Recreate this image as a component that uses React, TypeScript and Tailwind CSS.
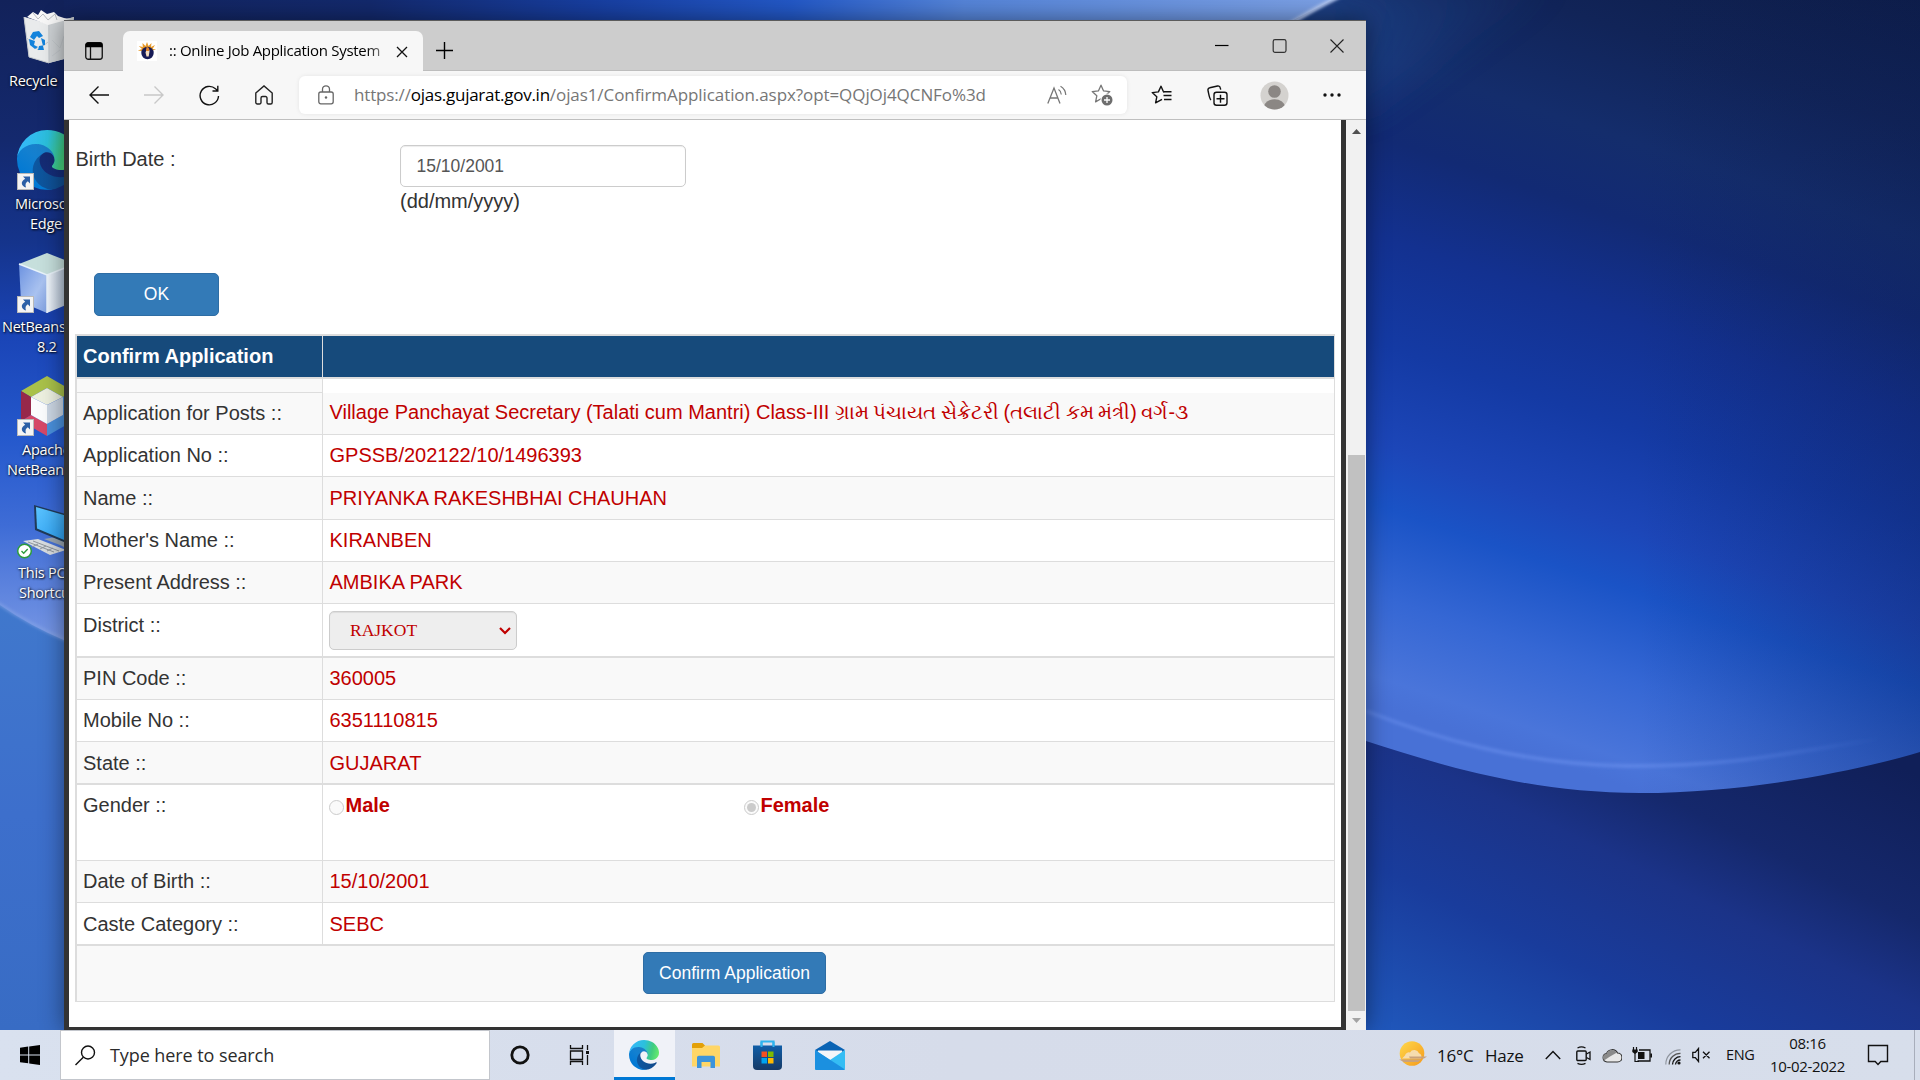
import React from "react";

const SEGOE = "font-['Open_Sans',sans-serif]";
const ARIAL = "font-['Liberation_Sans',sans-serif]";

function Wallpaper() {
  return (
    <svg className="absolute inset-0" width="1920" height="1030" viewBox="0 0 1920 1030" aria-hidden="true">
      <defs>
        <linearGradient id="sky" x1="0" y1="-200" x2="0" y2="700" gradientUnits="userSpaceOnUse" gradientTransform="translate(1366 0) skewY(18.5)">
          <stop offset="0" stopColor="#0d1c46" />
          <stop offset=".16" stopColor="#112458" />
          <stop offset=".28" stopColor="#142d6c" />
          <stop offset=".37" stopColor="#122a74" />
          <stop offset=".48" stopColor="#133190" />
          <stop offset=".6" stopColor="#143aa4" />
          <stop offset=".71" stopColor="#1c46b8" />
          <stop offset=".78" stopColor="#1a53c6" />
          <stop offset=".88" stopColor="#3567d4" />
          <stop offset=".97" stopColor="#4a75da" />
          <stop offset="1" stopColor="#4871d6" />
        </linearGradient>
        <linearGradient id="ground" x1="0" y1="500" x2="0" y2="1030" gradientUnits="userSpaceOnUse" gradientTransform="translate(1366 0) skewY(26.5)">
          <stop offset="0" stopColor="#101f58" />
          <stop offset=".28" stopColor="#15286c" />
          <stop offset=".44" stopColor="#1b3388" />
          <stop offset=".68" stopColor="#193c9c" />
          <stop offset="1" stopColor="#2058bc" />
        </linearGradient>
        <linearGradient id="shade" x1="1640" y1="0" x2="1920" y2="0" gradientUnits="userSpaceOnUse">
          <stop offset="0" stopColor="#0c1c50" stopOpacity="0" />
          <stop offset="1" stopColor="#0c1c50" stopOpacity=".28" />
        </linearGradient>
        <linearGradient id="arc" x1="1366" y1="0" x2="1880" y2="0" gradientUnits="userSpaceOnUse">
          <stop offset="0" stopColor="#6a90ee" stopOpacity=".45" />
          <stop offset=".5" stopColor="#6a90ee" stopOpacity=".6" />
          <stop offset="1" stopColor="#6a90ee" stopOpacity="0" />
        </linearGradient>
        <linearGradient id="lf" x1="0" y1="0" x2="0" y2="640" gradientUnits="userSpaceOnUse">
          <stop offset="0" stopColor="#12225a" />
          <stop offset=".22" stopColor="#14296e" />
          <stop offset=".38" stopColor="#15348c" />
          <stop offset=".52" stopColor="#1a44b6" />
          <stop offset=".68" stopColor="#2458cc" />
          <stop offset=".82" stopColor="#3e6cd6" />
          <stop offset="1" stopColor="#7696e4" />
        </linearGradient>
        <linearGradient id="lb" x1="0" y1="600" x2="0" y2="1030" gradientUnits="userSpaceOnUse">
          <stop offset="0" stopColor="#4078cc" />
          <stop offset=".5" stopColor="#3d6fcc" />
          <stop offset="1" stopColor="#386cc4" />
        </linearGradient>
        <linearGradient id="tp" x1="0" y1="0" x2="1320" y2="0" gradientUnits="userSpaceOnUse">
          <stop offset="0" stopColor="#12225a" />
          <stop offset=".28" stopColor="#13296c" />
          <stop offset=".45" stopColor="#173ea0" />
          <stop offset=".6" stopColor="#2358c6" />
          <stop offset=".73" stopColor="#5584d8" />
          <stop offset="1" stopColor="#7a9fe4" />
        </linearGradient>
        <linearGradient id="glow" x1="1300" y1="0" x2="1560" y2="80" gradientUnits="userSpaceOnUse">
          <stop offset="0" stopColor="#2a60b0" stopOpacity=".75" />
          <stop offset="1" stopColor="#1d4486" stopOpacity="0" />
        </linearGradient>
        <filter id="soft"><feGaussianBlur stdDeviation="1.5" /></filter>
        <filter id="wide" x="-30%" y="-60%" width="160%" height="220%"><feGaussianBlur stdDeviation="18" /></filter>
        <clipPath id="low">
          <path d="M1300 718L1366 741C1440 765 1530 793 1640 793C1750 793 1860 770 1920 752V1030H1300Z" />
        </clipPath>
      </defs>
      <rect width="66" height="1030" fill="url(#lf)" />
      <path d="M0 605Q30 626 66 641V1030H0Z" fill="url(#lb)" />
      <path d="M-4 602Q30 625 68 641" fill="none" stroke="#89a6e8" strokeOpacity=".6" strokeWidth="3" filter="url(#soft)" />
      <rect x="1280" width="640" height="800" fill="url(#sky)" />
      <rect x="1280" width="640" height="800" fill="url(#shade)" />
      <path d="M1290 -20H1560L1366 110H1290Z" fill="url(#glow)" opacity=".6" filter="url(#wide)" />
      <path d="M1366 711C1430 736 1520 765 1628 766S1800 750 1880 739" fill="none" stroke="url(#arc)" strokeWidth="4" filter="url(#soft)" />
      <g clipPath="url(#low)">
        <rect x="1300" y="700" width="620" height="330" fill="url(#ground)" />
      </g>
      <path d="M64 0H1332L1292 21H64Z" fill="url(#tp)" />
      <path d="M1290 24Q1312 10 1340 -4" fill="none" stroke="#b4c8f2" strokeWidth="4" filter="url(#soft)" />
    </svg>
  );
}

function EdgeLogo({ size, id }: { size: number; id: string }) {
  return (
    <svg width={size} height={size} viewBox="0 0 256 256" className="block shrink-0">
      <defs>
        <linearGradient id={id + "a"} x1="60" y1="170" x2="236" y2="170" gradientUnits="userSpaceOnUse">
          <stop stopColor="#0c59a4" />
          <stop offset="1" stopColor="#114a8b" />
        </linearGradient>
        <linearGradient id={id + "b"} x1="150" y1="90" x2="40" y2="220" gradientUnits="userSpaceOnUse">
          <stop stopColor="#1b7fc8" />
          <stop offset=".4" stopColor="#1380d0" />
          <stop offset="1" stopColor="#0078d4" />
        </linearGradient>
        <linearGradient id={id + "c"} x1="10" y1="70" x2="250" y2="130" gradientUnits="userSpaceOnUse">
          <stop stopColor="#35b8f8" />
          <stop offset=".45" stopColor="#2bc0dc" />
          <stop offset=".75" stopColor="#40cc80" />
          <stop offset="1" stopColor="#66eb6e" />
        </linearGradient>
      </defs>
      <path transform="translate(-4.63 -4.92)" fill={`url(#${id}a)`} d="M235.68 195.46a93.73 93.73 0 0 1-10.54 4.71 101.87 101.87 0 0 1-35.9 6.46c-47.32 0-88.54-32.55-88.54-74.32A31.48 31.48 0 0 1 117.13 105c-42.8 1.8-53.8 46.4-53.8 72.53 0 73.88 68.09 81.37 82.76 81.37 7.91 0 19.84-2.3 27-4.56l1.31-.44a128.34 128.34 0 0 0 66.6-52.8 4 4 0 0 0-5.32-5.64Z" />
      <path fill={`url(#${id}b)`} d="M105.73 241.42A79.2 79.2 0 0 1 83 220.08a80.72 80.72 0 0 1 29.49-120.75c3.12-1.47 8.45-4.13 15.54-4a32.35 32.35 0 0 1 25.69 13 31.88 31.88 0 0 1 6.36 18.66c0-.21 24.46-79.6-80-79.6-43.9 0-80 41.66-80 78.21a130.15 130.15 0 0 0 12.11 56 128 128 0 0 0 156.38 67.11 75.55 75.55 0 0 1-62.78-8Z" />
      <path fill={`url(#${id}c)`} d="M152.33 148.86c-.81 1.05-3.3 2.5-3.3 5.66 0 2.61 1.7 5.12 4.72 7.23 14.38 10 41.49 8.68 41.56 8.68a59.56 59.56 0 0 0 30.27-8.35A61.38 61.38 0 0 0 256 109.2c.26-22.41-8-37.31-11.34-43.91C223.46 23.84 177.72 0 128 0A128 128 0 0 0 0 126.2c.48-36.54 36.8-66.05 80-66.05 3.5 0 23.46.34 42 10.07 16.34 8.58 24.9 18.94 30.85 29.21 6.18 10.67 7.28 24.15 7.28 29.52s-2.74 13.33-7.8 19.91Z" />
    </svg>
  );
}

function Shortcut() {
  return (
    <svg className="absolute left-[17px] bottom-0" width="17" height="17" viewBox="0 0 17 17">
      <rect x=".5" y=".5" width="16" height="16" fill="#f4f4f4" stroke="#b9b9b9" />
      <path d="M6 3.500h7v7l-2.200-2.200C8.500 9.800 8 11.500 9 14.500 4.500 13 2.800 9 8.200 5.700Z" fill="#2b5fa6" />
    </svg>
  );
}

function RecycleIcon() {
  return (
    <svg className="absolute left-[22px] top-[8px]" width="52" height="56" viewBox="22 8 52 56">
      <path d="M24 17L48 24 74 17 68 58 49 63 29 57Z" fill="#dfe2e4" />
      <path d="M24 17L48 24 49 63 29 57Z" fill="#e9ebec" />
      <path d="M48 24L74 17 68 58 49 63Z" fill="#cdd1d4" />
      <path d="M27 17L33 12 38 15 41 10 47 14 54 12 58 16 64 18 70 19 48 25Z" fill="#f7f7f7" />
      <path d="M33 13L38 19 43 14 48 20 55 14 57 20" fill="none" stroke="#b8bcc0" />
      <path d="M24 17L29 57 49 63V25M27 38L38 50 48 42M52 40L60 48 64 36M52 56L60 50" fill="none" stroke="#c3c8cc" />
      <g fill="#1383dc">
        <path d="M33 32L39 31 43 36 39 38 37 36 34 40 30 37Z" />
        <path d="M29 39L35 41 34 45 38 47 35 49 30 45Z" />
        <path d="M39 46L45 45 45 40 41 38 44 50 38 50Z" />
      </g>
    </svg>
  );
}

function CubeIcon() {
  return (
    <svg className="absolute left-[18px] top-0" width="58" height="60" viewBox="0 0 58 60">
      <defs>
        <linearGradient id="cb1" x1="0" y1="0" x2="1" y2="1">
          <stop stopColor="#6c92e0" />
          <stop offset=".6" stopColor="#a9c2f0" />
          <stop offset="1" stopColor="#7f9fe0" />
        </linearGradient>
        <linearGradient id="cb2" x1="0" y1="0" x2="1" y2="0">
          <stop stopColor="#f2f7fc" />
          <stop offset="1" stopColor="#8aa0bc" />
        </linearGradient>
      </defs>
      <path d="M29 0L57 11 29 22 1 11Z" fill="#c6dfdc" />
      <path d="M1 11L29 22V60L3 49Z" fill="url(#cb1)" />
      <path d="M57 11L29 22V60L55 49Z" fill="url(#cb2)" />
      <path d="M1 11L29 22 57 11M29 22V60" fill="none" stroke="#eaf4fb" strokeWidth="1.500" />
    </svg>
  );
}

function ApacheCubeIcon() {
  return (
    <svg className="absolute left-[20px] top-0" width="54" height="60" viewBox="0 0 54 60">
      <path d="M27 0L53 15 43 21 27 12 11 21 1 15Z" fill="#a9c14a" />
      <path d="M1 15L11 21V39L1 45Z" fill="#97284a" />
      <path d="M1 45L11 39 27 48V60Z" fill="#d64868" />
      <path d="M53 15V45L27 60V48L43 39V21Z" fill="#4a90dc" />
      <path d="M27 12L43 21 27 29 11 21Z" fill="#edf0e0" />
      <path d="M11 21L27 29V48L11 39Z" fill="#fbfcfd" />
      <path d="M43 21L27 29V48L43 39Z" fill="#ccd7e4" />
    </svg>
  );
}

function PcIcon() {
  return (
    <svg className="absolute left-[16px] top-0" width="60" height="56" viewBox="0 0 60 56">
      <defs>
        <linearGradient id="scr" x1="0" y1="0" x2="1" y2="1">
          <stop stopColor="#5cc4ff" />
          <stop offset="1" stopColor="#1f97f0" />
        </linearGradient>
      </defs>
      <path d="M28 34L40 32 52 36V44L44 40Z" fill="#9aa6b2" />
      <path d="M18 0L60 12V42L19 25Z" fill="#203a58" />
      <path d="M20 2L60 13.500V40L21 23.500Z" fill="url(#scr)" />
      <path d="M7 36L22 34 50 45 34 50Z" fill="#d9dde0" />
      <path d="M12 37L38 47M17 36L43 46M22 39L16 42M30 41L24 44M37 43L31 46" stroke="#8f969c" fill="none" />
      <circle cx="8.500" cy="46" r="6.800" fill="#fff" stroke="#2d9c3c" strokeWidth="1.500" />
      <path d="M5.500 46l2.200 2.200 4-4.200" fill="none" stroke="#2d9c3c" strokeWidth="1.400" />
    </svg>
  );
}

function DeskLabel({ children, className }: { children: React.ReactNode; className: string }) {
  return (
    <span className={"absolute whitespace-nowrap text-[14.5px] leading-5 tracking-[-0.25px] text-white [text-shadow:1px_1px_2px_rgba(0,0,0,0.9),0_0_3px_rgba(0,0,0,0.6)] " + className}>
      {children}
    </span>
  );
}

function DesktopIcons() {
  return (
    <div className={"absolute left-0 top-0 h-[1030px] w-[120px] " + SEGOE}>
      <RecycleIcon />
      <DeskLabel className="left-[9px] top-[71px]">Recycle</DeskLabel>
      <div className="absolute left-0 top-[130px] h-[60px] w-[80px]">
        <div className="pl-[17px]"><EdgeLogo size={60} id="desk" /></div>
        <Shortcut />
      </div>
      <DeskLabel className="left-[15px] top-[194px]">Microsoft</DeskLabel>
      <DeskLabel className="left-[30px] top-[214px]">Edge</DeskLabel>
      <div className="absolute left-0 top-[253px] h-[60px] w-[80px]"><CubeIcon /><Shortcut /></div>
      <DeskLabel className="left-[2px] top-[317px]">NetBeans</DeskLabel>
      <DeskLabel className="left-[37px] top-[337px]">8.2</DeskLabel>
      <div className="absolute left-0 top-[376px] h-[60px] w-[80px]"><ApacheCubeIcon /><Shortcut /></div>
      <DeskLabel className="left-[22px] top-[440px]">Apache</DeskLabel>
      <DeskLabel className="left-[7px] top-[460px]">NetBeans</DeskLabel>
      <div className="absolute left-0 top-[505px] h-[60px] w-[80px]"><PcIcon /></div>
      <DeskLabel className="left-[18px] top-[563px]">This PC -</DeskLabel>
      <DeskLabel className="left-[19px] top-[583px]">Shortcut</DeskLabel>
    </div>
  );
}

function TitleBar() {
  return (
    <div className="flex h-[50px] bg-[#cdcdcd] shadow-[inset_0_-1px_0_#bdbdbd]">
      <div className="flex w-[59px] pl-[21px] pt-[21px]">
        <svg width="18" height="18" viewBox="0 0 18 18">
          <rect x=".75" y=".75" width="16.500" height="16.500" rx="2.500" fill="none" stroke="#111" strokeWidth="1.300" />
          <path d="M.5 5.200V3A2.500 2.500 0 0 1 3 .5h12A2.500 2.500 0 0 1 17.500 3v2.200Z" fill="#000" />
          <path d="M5.500 5v12" stroke="#111" strokeWidth="1.300" />
        </svg>
      </div>
      <div className="relative z-10 mt-[10px] flex h-[40px] w-[300px] rounded-t-[7px] bg-[#f7f7f7] pl-[14px]">
        <svg className="mt-[10px]" width="20" height="20" viewBox="0 0 20 20">
          <rect width="20" height="20" fill="#fff" />
          <path d="M10 1l1.500 4L14.500 2l-.5 4 4-2-2.500 4 3.500 0-4 2H4L.8 9.500 5 8 1.800 5l4 1L5.500 2l3 3Z" fill="#e79a2c" />
          <circle cx="10.500" cy="12" r="6.200" fill="#171b56" />
          <path d="M10 7.500c2 0 2.800 1.500 2.500 3l-.8 5H9.500l-1-4Z" fill="#f3dcc0" />
          <path d="M9.500 6c2.500 0 3 2 2.500 4H9Z" fill="#e2832a" />
        </svg>
        <div className="ml-[12px] w-[223px] whitespace-nowrap">
          <div className="w-[215px] bg-gradient-to-r from-black from-90% to-[#999] bg-clip-text pt-[9px] text-[15px] leading-5 tracking-[-0.3px] text-transparent">
            :: Online Job Application System
          </div>
        </div>
        <svg className="mt-[15px] ml-[4px]" width="12" height="12" viewBox="0 0 12 12">
          <path d="M1 1l10 10M11 1L1 11" stroke="#111" strokeWidth="1.300" />
        </svg>
      </div>
      <svg className="ml-[12px] mt-[20px]" width="19" height="19" viewBox="0 0 19 19">
        <path d="M9.500 1v17M1 9.500h17" stroke="#000" strokeWidth="1.400" />
      </svg>
      <div className="ml-auto flex pr-[22px] pt-[18px]">
        <svg className="mr-[43px]" width="14" height="14" viewBox="0 0 14 14"><path d="M0 6.500h13.500" stroke="#000" strokeWidth="1.200" /></svg>
        <svg className="mr-[43px]" width="15" height="14" viewBox="0 0 15 14"><rect x="1.200" y=".7" width="12.800" height="12.600" rx="1.800" fill="none" stroke="#333" strokeWidth="1.200" /></svg>
        <svg width="14" height="14" viewBox="0 0 14 14"><path d="M.5 .5l13 13M13.500 .5l-13 13" stroke="#222" strokeWidth="1.100" /></svg>
      </div>
    </div>
  );
}

const STAR = "M10 1.200l2.600 5.700 6.200.7-4.600 4.200 1.300 6.100L10 14.800l-5.400 3.100 1.200-6.100L1.200 7.600l6.200-.7Z";

function Toolbar() {
  return (
    <div className="flex h-[49px] items-center border-b border-[#bfbfbf] bg-[#f7f7f7]">
      <div className="flex items-center pl-[25px] text-black">
        <svg className="mr-[35px]" width="20" height="20" viewBox="0 0 20 20"><path d="M9.500 1.500L1 10l8.500 8.500M1 10h19" fill="none" stroke="#111" strokeWidth="1.400" /></svg>
        <svg className="mr-[35px]" width="20" height="20" viewBox="0 0 20 20"><path d="M10.500 1.500L19 10l-8.500 8.500M19 10H0" fill="none" stroke="#c8c8c8" strokeWidth="1.400" /></svg>
        <svg className="mr-[34px]" width="21" height="21" viewBox="0 0 21 21">
          <path d="M19.500 11A9.200 9.200 0 1 1 16.500 3.800L18.500 5.500M18.800 .8V6h-5.300" fill="none" stroke="#111" strokeWidth="1.400" />
        </svg>
        <svg className="mr-[25px]" width="20" height="20" viewBox="0 0 20 20">
          <path d="M1.800 8L10 .9 18.200 8v9.500a1.500 1.500 0 0 1-1.500 1.500h-2.200a1.500 1.500 0 0 1-1.500-1.500V13a1.500 1.500 0 0 0-1.500-1.500h-3A1.500 1.500 0 0 0 7 13v4.500A1.500 1.500 0 0 1 5.500 19H3.300a1.500 1.500 0 0 1-1.500-1.500Z" fill="none" stroke="#222" strokeWidth="1.400" />
        </svg>
      </div>
      <div className="flex h-[38px] w-[828px] items-center rounded-[6px] bg-white pl-[19px] text-[17px] leading-[38px] text-[#767676] shadow-[0_0_4px_rgba(0,0,0,0.08)]">
        <svg className="mr-[20px]" width="16" height="20" viewBox="0 0 16 20">
          <rect x=".8" y="7" width="14.400" height="11.800" rx="2" fill="none" stroke="#666" strokeWidth="1.300" />
          <path d="M4.500 7V4.300a3.500 3.500 0 0 1 7 0V7" fill="none" stroke="#666" strokeWidth="1.300" />
          <circle cx="8" cy="12.500" r="1.200" fill="#666" />
        </svg>
        <span className="tracking-[-0.15px]">https://</span>
        <span className="tracking-[-0.26px] text-black">ojas.gujarat.gov.in</span>
        <span className="tracking-[-0.08px]">/ojas1/ConfirmApplication.aspx?opt=QQjOj4QCNFo%3d</span>
        <svg className="ml-auto" width="20" height="20" viewBox="0 0 20 20">
          <path d="M.8 18.500L7 3l6 15.500M3 13h8" fill="none" stroke="#777" strokeWidth="1.300" />
          <path d="M11.500 4.500q2.500 1.500 2.800 5M13.500 1.200q5 2.800 5.300 8.800" fill="none" stroke="#777" strokeWidth="1.200" />
        </svg>
        <svg className="ml-[24px] mr-[14px]" width="22" height="22" viewBox="0 0 22 22">
          <path d={STAR} fill="none" stroke="#767676" strokeWidth="1.300" strokeLinejoin="round" />
          <circle cx="16" cy="16" r="6.500" fill="#fff" />
          <circle cx="16" cy="16" r="5.500" fill="#6e6e6e" />
          <path d="M16 13v6M13 16h6" stroke="#fff" strokeWidth="1.300" />
        </svg>
      </div>
      <svg className="ml-[24px]" width="21" height="20" viewBox="0 0 21 20">
        <path d="M13 6.800L12.600 7 10 1.200 7.400 6.900l-6.200.7 4.600 4.200-1.200 6.100 6.400-3.600" fill="none" stroke="#111" strokeWidth="1.400" strokeLinejoin="round" />
        <path d="M13 6.800h7.500M12.500 10.500h8M13 14.500h7.500" stroke="#111" strokeWidth="1.400" />
      </svg>
      <svg className="ml-[35px]" width="21" height="21" viewBox="0 0 21 21">
        <path d="M4 15C2.500 14 2 10 1 5.500A2.200 2.200 0 0 1 2.800 2.800L10.500 1a2.200 2.200 0 0 1 2.700 1.700l.5 2" fill="none" stroke="#111" strokeWidth="1.400" />
        <rect x="7" y="7.200" width="13" height="13" rx="2.500" fill="none" stroke="#111" strokeWidth="1.400" />
        <path d="M13.500 9.800v8M9.500 13.800h8" stroke="#111" strokeWidth="1.400" />
      </svg>
      <svg className="ml-[32px]" width="29" height="29" viewBox="0 0 29 29">
        <clipPath id="avc"><circle cx="14.500" cy="14.500" r="14" /></clipPath>
        <g clipPath="url(#avc)">
          <rect width="29" height="29" fill="#d4d2cf" />
          <circle cx="14.500" cy="10.500" r="6.300" fill="#8b8784" />
          <ellipse cx="14.500" cy="26" rx="10.500" ry="7.800" fill="#8b8784" />
        </g>
      </svg>
      <svg className="ml-[34px]" width="18" height="6" viewBox="0 0 18 6">
        <g fill="#111"><circle cx="2" cy="3" r="1.700" /><circle cx="9" cy="3" r="1.700" /><circle cx="16" cy="3" r="1.700" /></g>
      </svg>
    </div>
  );
}

function Row({ label, height, striped, thick, low, children }: { label: string; height: string; striped?: boolean; thick?: boolean; low?: boolean; children?: React.ReactNode }) {
  return (
    <div className={"flex border-[#ddd] " + height + (striped ? " bg-[#f9f9f9]" : " bg-white") + (thick ? " border-b-2" : " border-b")}>
      <div className={"w-[246px] shrink-0 border-r border-[#ddd] pl-[6px] " + (low ? "pt-[7px]" : "pt-[6px]")}>{label}</div>
      <div className={"grow pl-[6.5px] text-[#c00000] " + (low ? "pt-[7px]" : "pt-[6px]")}>{children}</div>
    </div>
  );
}

function Radio({ checked }: { checked?: boolean }) {
  return (
    <span className="mt-[9px] flex h-[15px] w-[15px] shrink-0 items-center justify-center rounded-full border border-[#cbcbcb] bg-[#fafafa]">
      {checked && <span className="h-[9px] w-[9px] rounded-full bg-[#cbcbcb]" />}
    </span>
  );
}

function PageContent() {
  return (
    <div className={"flex h-[910px] w-[1282px] flex-col border-x-[5px] border-b-[3px] border-[#333] bg-white text-[20px] leading-[28.6px] text-[#333] " + ARIAL}>
      <div className="flex h-[153px] pl-[6.5px] pt-[25px]">
        <div className="w-[324.500px]">Birth Date :</div>
        <div>
          <div className="h-[42px] w-[286px] rounded-[5px] border border-[#ccc] pl-[15.5px] text-[17.5px] leading-[40px] text-[#555] shadow-[inset_0_1px_1px_rgba(0,0,0,0.075)]">15/10/2001</div>
          <div>(dd/mm/yyyy)</div>
        </div>
      </div>
      <div className="ml-[25px] flex h-[43px] w-[125px] items-center justify-center rounded-[5px] border border-[#2e6da4] bg-[#337ab7] text-[17.5px] text-white">OK</div>
      <div className="ml-[6px] mt-[18px] flex w-[1260px] flex-col border-l-2 border-r border-t-2 border-[#ddd]">
        <div className="flex h-[43px] border-b-2 border-[#ddd] bg-[#164a7b] font-bold text-white">
          <div className="w-[246px] border-r border-[#ddd] pl-[6px] pt-[6px]">Confirm Application</div>
        </div>
        <div className="flex h-[14px]">
          <div className="w-[246px] border-b border-r border-[#ddd] bg-[#f9f9f9]" />
        </div>
        <Row label="Application for Posts ::" height="h-[42px]" striped>
          <div className="-mt-px whitespace-pre">Village Panchayat Secretary (Talati cum Mantri) Class-III <span className="text-[19.7px] [word-spacing:-0.9px]">ગ્રામ પંચાયત સેક્રેટરી (તલાટી કમ મંત્રી) વર્ગ-૩</span></div>
        </Row>
        <Row label="Application No ::" height="h-[42px]">GPSSB/202122/10/1496393</Row>
        <Row label="Name ::" height="h-[43px]" striped low>PRIYANKA RAKESHBHAI CHAUHAN</Row>
        <Row label="Mother's Name ::" height="h-[42px]">KIRANBEN</Row>
        <Row label="Present Address ::" height="h-[42px]" striped>AMBIKA PARK</Row>
        <Row label="District ::" height="h-[54px]" thick low>
          <div className="-ml-[0.5px] flex h-[39px] w-[188px] items-center justify-between rounded-[5px] border border-[#ccc] bg-[#eee] pl-[20px] pr-[5px] font-['Liberation_Serif',serif] text-[17.5px] shadow-[inset_0_1px_1px_rgba(0,0,0,0.075)]">
            RAJKOT
            <svg width="12" height="8" viewBox="0 0 12 8"><path d="M1 1l5 5 5-5" fill="none" stroke="#c00000" strokeWidth="2.200" /></svg>
          </div>
        </Row>
        <Row label="PIN Code ::" height="h-[42px]" striped>360005</Row>
        <Row label="Mobile No ::" height="h-[42px]">6351110815</Row>
        <Row label="State ::" height="h-[43px]" striped thick low>GUJARAT</Row>
        <Row label="Gender ::" height="h-[76px]">
          <div className="-ml-[0.5px] flex font-bold">
            <div className="flex w-[415px]"><Radio /><span className="ml-[1.5px]">Male</span></div>
            <Radio checked /><span className="ml-[1.5px]">Female</span>
          </div>
        </Row>
        <Row label="Date of Birth ::" height="h-[42px]" striped>15/10/2001</Row>
        <Row label="Caste Category ::" height="h-[43px]" thick low>SEBC</Row>
        <div className="flex h-[56px] border-b border-[#ddd] bg-[#f9f9f9] pl-[566px] pt-[6px]">
          <div className="flex h-[42px] w-[183px] items-center justify-center rounded-[5px] border border-[#2e6da4] bg-[#337ab7] text-[17.5px] text-white">Confirm Application</div>
        </div>
      </div>
    </div>
  );
}

function Scrollbar() {
  return (
    <div className="flex h-[910px] w-[20px] flex-col items-center bg-[#f1f1f1]">
      <svg className="mt-[9px]" width="9" height="5" viewBox="0 0 9 5"><path d="M0 5L4.500 0 9 5Z" fill="#505050" /></svg>
      <div className="ml-px mt-[321px] h-[556px] w-[17px] bg-[#c1c1c1]" />
      <svg className="mt-[7px]" width="9" height="5" viewBox="0 0 9 5"><path d="M0 0L4.500 5 9 0Z" fill="#a3a3a3" /></svg>
    </div>
  );
}

function BrowserWindow() {
  return (
    <div className={"absolute left-[64px] top-[20px] flex w-[1302px] flex-col border-t border-[#5c5c5c] shadow-[0_0_22px_rgba(0,0,0,0.45)] " + SEGOE}>
      <TitleBar />
      <Toolbar />
      <div className="flex">
        <PageContent />
        <Scrollbar />
      </div>
    </div>
  );
}

function Tray() {
  return (
    <div className="ml-auto flex h-full items-center text-[#111]">
      <svg className="mt-[-2px]" width="30" height="28" viewBox="0 0 30 28">
        <defs>
          <linearGradient id="sun" x1="0" y1="0" x2="1" y2="1"><stop stopColor="#ffd84a" /><stop offset="1" stopColor="#f59a1c" /></linearGradient>
        </defs>
        <circle cx="14" cy="13.500" r="12.300" fill="url(#sun)" />
        <path d="M4 18.500h19a3.500 3.500 0 0 0-2-5.200 5 5 0 0 0-9-.8 4 4 0 0 0-5 3Z" fill="#f6dcae" />
        <path d="M1 19.500h22l-3 2.500H6ZM11 16.500h18l-3 2H12Z" fill="#c9a27c" />
      </svg>
      <span className="ml-[9px] mt-[2px] w-[48px] whitespace-nowrap text-[17px] leading-5 tracking-[-0.2px]">16°C</span>
      <span className="mt-[2px] w-[60px] text-[17px] leading-5 tracking-[-0.2px]">Haze</span>
      <svg className="mr-[15px]" width="16" height="10" viewBox="0 0 16 10"><path d="M.8 9L8 1.500 15.200 9" fill="none" stroke="#111" strokeWidth="1.400" /></svg>
      <svg className="mr-[11px]" width="15" height="19" viewBox="0 0 15 19">
        <rect x=".8" y="5" width="9.400" height="9.500" rx="1" fill="none" stroke="#111" strokeWidth="1.400" />
        <path d="M10.500 8l3.500-2v7.500l-3.500-2M1.500 2Q5.500-.2 9.500 2M1.500 17.300Q5.500 19.300 9.500 17.300" fill="none" stroke="#111" strokeWidth="1.300" />
      </svg>
      <svg className="mr-[10px]" width="20" height="16" viewBox="0 0 20 16">
        <path d="M5 15a4.200 4.200 0 0 1-.5-8.300A6 6 0 0 1 15.500 6a4.500 4.500 0 0 1 0 9Z" fill="#e8e8e8" stroke="#333" strokeWidth="1.200" />
        <path d="M1 11a4 4 0 0 1 3.500-4.300A6 6 0 0 1 15 5.500L8 9.500 2 13.500Z" fill="#8a8a8a" />
      </svg>
      <svg className="mr-[13px]" width="20" height="16" viewBox="0 0 20 16">
        <path d="M1.500 0v3M4.500 0v3M3 6v8.500h4" stroke="#111" strokeWidth="1.200" fill="none" />
        <path d="M.3 2.500h5.400v2.500L3 7 .3 5Z" fill="#111" />
        <path d="M7 3h11v11H5.500" fill="none" stroke="#111" strokeWidth="1.300" />
        <rect x="6" y="5" width="6.500" height="7" fill="#111" />
        <rect x="18.300" y="6.500" width="1.700" height="4" fill="#111" />
      </svg>
      <svg className="mr-[11px] mt-[3px]" width="16" height="16" viewBox="0 0 16 16" fill="none">
        <path d="M.8 15.500A14.500 14.500 0 0 1 15.500.8" stroke="#8f959e" strokeWidth="1.200" />
        <path d="M4.200 15.500A11.200 11.200 0 0 1 15.500 4.300" stroke="#555" strokeWidth="1.300" />
        <path d="M7.500 15.500a8 8 0 0 1 8-7.800M10.500 15.500a5 5 0 0 1 5-4.500" stroke="#111" strokeWidth="1.300" />
        <circle cx="14" cy="14" r="1.600" fill="#111" />
      </svg>
      <svg className="mr-[15px]" width="19" height="16" viewBox="0 0 19 16" fill="none" stroke="#111" strokeWidth="1.300">
        <path d="M.8 5.300h2.500L6.500 1.500v13L3.300 10.700H.8ZM11 4.800l6.500 6.500M17.500 4.800L11 11.300" />
      </svg>
      <span className="w-[36px] text-[14.5px] leading-5 tracking-[-0.3px]">ENG</span>
      <div className="flex w-[91px] flex-col items-center text-[15px] leading-[23px] tracking-[-0.33px]">
        <span>08:16</span>
        <span>10-02-2022</span>
      </div>
      <svg className="ml-[14px]" width="22" height="22" viewBox="0 0 22 22">
        <path d="M1.500 1.500h19v16h-6.700L11 20.500 8.200 17.500H1.500Z" fill="none" stroke="#111" strokeWidth="1.400" />
      </svg>
      <div className="ml-[25px] h-full w-[6px] border-l border-[#a8aebb]" />
    </div>
  );
}

function Taskbar() {
  return (
    <div className={"absolute left-0 top-[1030px] flex h-[50px] w-[1920px] items-center bg-gradient-to-r from-[#d9e1ef] via-[#d6dcea] to-[#d7deeb] " + SEGOE}>
      <svg className="ml-[20px] mr-[20px]" width="20" height="20" viewBox="0 0 20 20">
        <path d="M0 2.800L8.200 1.600V9.400H0ZM9.200 1.500L20 0V9.400H9.200ZM0 10.400H8.200V18.300L0 17.200ZM9.200 10.400H20V20L9.200 18.400Z" fill="#000" />
      </svg>
      <div className="flex h-[50px] w-[430px] items-center border border-[#c3c6cc] bg-white pl-[14px] text-[18px] leading-5 tracking-[-0.08px] text-[#2b2b2b]">
        <svg className="mr-[14px]" width="21" height="21" viewBox="0 0 21 21">
          <circle cx="13" cy="7.500" r="6.500" fill="none" stroke="#111" strokeWidth="1.400" />
          <path d="M8.300 12.200L.5 20" stroke="#111" strokeWidth="1.400" />
        </svg>
        Type here to search
      </div>
      <svg className="ml-[20px]" width="20" height="20" viewBox="0 0 20 20"><circle cx="10" cy="10" r="8.200" fill="none" stroke="#111" strokeWidth="2.800" /></svg>
      <svg className="ml-[39px]" width="22" height="20" viewBox="0 0 22 20">
        <path d="M1.500 0v3.500h12V0M1.500 20v-3.500h12V20M1.500 6h12v8.500h-12ZM18.500 0v5M18.500 10v10" fill="none" stroke="#111" strokeWidth="1.300" />
        <rect x="17" y="6" width="3" height="3" fill="#111" />
      </svg>
      <div className="ml-[23px] flex h-[50px] w-[61px] items-center justify-center border-b-[3px] border-[#0078d4] bg-[#f0f2f8] pr-[2px] pt-[3px]">
        <EdgeLogo size={30} id="bar" />
      </div>
      <svg className="ml-[17px]" width="28" height="25" viewBox="0 0 28 25">
        <path d="M0 1.500A1.500 1.500 0 0 1 1.500 0h9l2.500 2.500V6H0Z" fill="#e3a008" />
        <path d="M0 5h10l3-2.500h13.500A1.500 1.500 0 0 1 28 4v19.500H0Z" fill="#ffd667" />
        <path d="M5 25V14.500A1.800 1.800 0 0 1 6.800 12.700h14.400a1.800 1.800 0 0 1 1.800 1.800V25h-4.500v-6h-9v6Z" fill="#3d94db" />
      </svg>
      <svg className="ml-[33px]" width="29" height="30" viewBox="0 0 29 30">
        <defs><linearGradient id="bag" x1="0" y1="0" x2="0" y2="1"><stop stopColor="#0f5ea8" /><stop offset="1" stopColor="#173a66" /></linearGradient></defs>
        <path d="M8.500 8V1.500h12V8" fill="none" stroke="#2fb4ee" strokeWidth="2.200" />
        <path d="M0 5.500h29V26a4 4 0 0 1-4 4H4a4 4 0 0 1-4-4Z" fill="url(#bag)" />
        <path d="M8.500 2v5M20.500 2v5" stroke="#2fb4ee" strokeWidth="2" />
        <rect x="8.500" y="11.500" width="5.500" height="5.500" fill="#f25022" />
        <rect x="15" y="11.500" width="5.500" height="5.500" fill="#7fba00" />
        <rect x="8.500" y="18" width="5.500" height="5.500" fill="#00a4ef" />
        <rect x="15" y="18" width="5.500" height="5.500" fill="#ffb900" />
      </svg>
      <svg className="ml-[33px]" width="30" height="29" viewBox="0 0 30 29">
        <path d="M0 9L15 0 30 9 15 19Z" fill="#0a63b4" />
        <path d="M3 9.500H27V20H3Z" fill="#f4f6f9" />
        <path d="M0 9L15 19 30 9V27.500A1.500 1.500 0 0 1 28.500 29H1.500A1.500 1.500 0 0 1 0 27.500Z" fill="#35bdf4" />
        <path d="M0 9L30 28.500 28.500 29H1.500A1.500 1.500 0 0 1 0 27.500Z" fill="#1b90e0" />
      </svg>
      <Tray />
    </div>
  );
}

export default function App() {
  return (
    <div className="relative h-[1080px] w-[1920px] overflow-hidden bg-[#12225a]">
      <Wallpaper />
      <DesktopIcons />
      <BrowserWindow />
      <Taskbar />
    </div>
  );
}
